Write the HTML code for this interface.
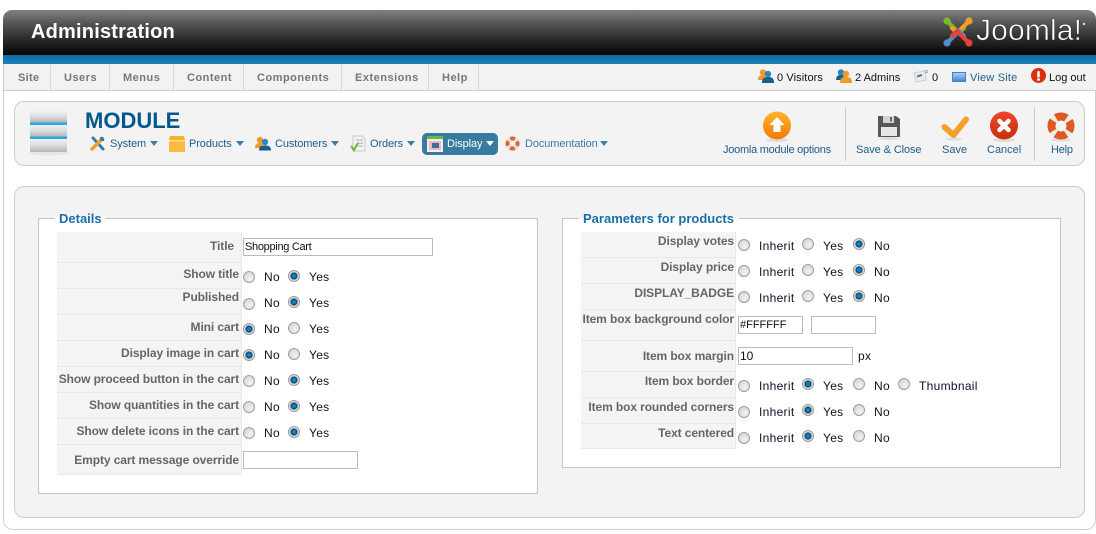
<!DOCTYPE html>
<html><head><meta charset="utf-8"><title>Administration</title>
<style>
html,body{margin:0;padding:0;background:#fff;width:1096px;height:534px;overflow:hidden}
body{position:relative;font-family:"Liberation Sans",sans-serif;font-size:12px;color:#111}
.a,.t,.l,.r,.n,.u,.f,.i,.o,svg{position:absolute}
.t{line-height:14px;white-space:nowrap}
.o{line-height:14px;white-space:nowrap;letter-spacing:.3px;color:#10102a;margin-top:-1px}
.n{line-height:14px;white-space:nowrap;top:71px;font-weight:bold;font-size:11px;letter-spacing:.5px;color:#777}
.d{position:absolute;top:65px;height:25px;width:1px;background:#d8d8d8}
.u{line-height:14px;white-space:nowrap;font-size:11px;letter-spacing:-.2px;color:#1c5d8c}
.m{top:137px;letter-spacing:-.1px}
.l{line-height:14px;white-space:nowrap;text-align:right;font-weight:bold;letter-spacing:-.1px;color:#666}
.b{position:absolute;background:#f4f4f4;border-bottom:1px solid #e8e8e8;border-right:1px solid #e8e8e8;box-sizing:border-box}
.f{border:1px solid #c4c4c4;background:#fff;box-sizing:border-box}
.i{border:1px solid #bbb;background:#fff;box-sizing:border-box;height:18px;line-height:16px;font-size:11px;padding-left:1px;color:#111;white-space:nowrap;overflow:hidden}
.r{width:12px;height:12px;border-radius:50%;box-sizing:border-box;border:1px solid #a0a0a0;background:radial-gradient(circle at 60% 65%,#f2f2f2,#cfcfcf)}
.r.c{border-color:#9a9a9a;background:radial-gradient(circle at 50% 50%,#2a93cc 0,#0b6ca6 30%,#083f66 44%,#dcdcdc 56%,#f2f2f2 100%)}
</style></head><body>

<!-- page frame -->
<div class="a" style="left:3px;top:50px;width:1093px;height:480px;box-sizing:border-box;border:1px solid #cfcfcf;border-top:0;border-radius:0 0 10px 10px"></div>

<!-- header -->
<div class="a" style="left:3px;top:10px;width:1093px;height:45px;border-radius:9px 9px 0 0;background:linear-gradient(#808080,#555 30%,#222 72%,#050505)"></div>
<div class="a" style="left:3px;top:55px;width:1093px;height:9px;background:linear-gradient(#0f6a9f,#1a83b8)"></div>
<div class="t" style="left:31px;top:20px;line-height:24px;font-size:20px;font-weight:bold;letter-spacing:.2px;color:#fff">Administration</div>

<!-- joomla logo -->
<svg style="left:942px;top:16px" width="32" height="32" viewBox="0 0 32 32" fill="none" stroke-linecap="round" stroke-linejoin="round">
<path d="M6 6 L17 17 L22 12" stroke="#7ab929" stroke-width="4.200"/>
<path d="M26 6 L15 17 L10 12" stroke="#f49e26" stroke-width="4.200"/>
<path d="M6 26 L17 15 L22 20" stroke="#4f8dcc" stroke-width="4.200"/>
<path d="M26 26 L15 15 L10 20" stroke="#e8403a" stroke-width="4.200"/>
<circle cx="5" cy="5" r="3.600" fill="#7ab929"/><circle cx="27" cy="5" r="3.600" fill="#f49e26"/>
<circle cx="5" cy="27" r="3.600" fill="#4f8dcc"/><circle cx="27" cy="27" r="3.600" fill="#e8403a"/>
</svg>
<svg style="left:974px;top:14px" width="120" height="36" viewBox="0 0 120 36"><text x="2" y="26" font-family="Liberation Sans" font-size="30" fill="#fff" stroke="#333" stroke-width=".6" textLength="106">Joomla!</text><circle cx="110" cy="10" r="1.200" fill="#ddd"/></svg>

<!-- menu bar -->
<div class="a" style="left:4px;top:64px;width:1092px;height:27px;background:#f2f2f2;border-bottom:1px solid #cfcfcf;box-sizing:border-box"></div>
<div class="n" style="left:18px;letter-spacing:.3px">Site</div><div class="d" style="left:50px"></div>
<div class="n" style="left:64px">Users</div><div class="d" style="left:109px"></div>
<div class="n" style="left:123px">Menus</div><div class="d" style="left:173px"></div>
<div class="n" style="left:187px">Content</div><div class="d" style="left:243px"></div>
<div class="n" style="left:257px">Components</div><div class="d" style="left:341px"></div>
<div class="n" style="left:355px">Extensions</div><div class="d" style="left:428px"></div>
<div class="n" style="left:442px">Help</div><div class="d" style="left:478px"></div>

<!-- status -->
<svg style="left:758px;top:68px" width="16" height="16" viewBox="0 0 16 16"><circle cx="5" cy="4.500" r="3.200" fill="#f09a2a"/><path d="M0 12c0-4 2-5 5-5s3 1 3 5z" fill="#f09a2a"/><circle cx="10" cy="6" r="3.200" fill="#2f86b8"/><path d="M4 15c0-5 2-6 6-6s6 1 6 6z" fill="#14628c"/></svg>
<div class="t" style="left:777px;top:71px;font-size:11px;letter-spacing:.1px">0 Visitors</div>
<svg style="left:836px;top:68px" width="16" height="16" viewBox="0 0 16 16"><circle cx="5" cy="4.500" r="3.200" fill="#2f86b8"/><path d="M0 12c0-4 2-5 5-5s3 1 3 5z" fill="#14628c"/><circle cx="10" cy="6" r="3.200" fill="#f09a2a"/><path d="M4 15c0-5 2-6 6-6s6 1 6 6z" fill="#f09a2a"/></svg>
<div class="t" style="left:855px;top:71px;font-size:11px">2 Admins</div>
<svg style="left:913px;top:69px" width="16" height="15" viewBox="0 0 16 15"><path d="M1 4l11-2 1 9-10 2z" fill="#ececec" stroke="#cfcfcf"/><path d="M4 7.500l5-1.500" stroke="#4a7fa6" stroke-width="2"/><circle cx="13.500" cy="2.500" r="1.300" fill="#fff" stroke="#6a9cc0" stroke-width=".7"/></svg>
<div class="t" style="left:932px;top:71px;font-size:11px">0</div>
<div class="a" style="left:952px;top:72px;width:14px;height:10px;box-sizing:border-box;border:1px solid #4c7fb6;background:linear-gradient(#a8d0f2,#3f8cdc)"></div>
<div class="t" style="left:970px;top:71px;font-size:11px;letter-spacing:.2px;color:#23638f">View Site</div>
<svg style="left:1031px;top:68px" width="15" height="15" viewBox="0 0 15 15"><circle cx="7.500" cy="7.500" r="7.500" fill="#d9300f"/><rect x="6.200" y="3" width="2.600" height="6.500" rx="1" fill="#fff"/><circle cx="7.500" cy="11.500" r="1.400" fill="#fff"/></svg>
<div class="t" style="left:1049px;top:71px;font-size:11px">Log out</div>

<!-- toolbar -->
<div class="a" style="left:14px;top:101px;width:1071px;height:65px;box-sizing:border-box;background:#f3f3f3;border:1px solid #cdcdcd;border-radius:10px"></div>
<svg style="left:27px;top:108px" width="44" height="48" viewBox="0 0 44 48">
<defs><linearGradient id="g" x1="0" y1="0" x2="0" y2="1"><stop offset="0" stop-color="#f0f0f0"/><stop offset=".5" stop-color="#dcdcdc"/><stop offset="1" stop-color="#b4b4b4"/></linearGradient></defs>
<ellipse cx="22" cy="45" rx="20" ry="2.500" fill="#e6e6e6"/>
<rect x="3" y="14" width="37" height="3" fill="#2aa8e6"/><rect x="3" y="28" width="37" height="3" fill="#2aa8e6"/>
<rect x="3" y="3" width="37" height="11.500" rx="1" fill="url(#g)"/><rect x="3" y="17" width="37" height="11.500" rx="1" fill="url(#g)"/><rect x="3" y="31" width="37" height="13" rx="1" fill="url(#g)"/>
</svg>
<div class="t" style="left:85px;top:108px;line-height:26px;font-size:22px;font-weight:bold;color:#02588c">MODULE</div>

<!-- submenu -->
<svg style="left:90px;top:135px" width="16" height="17" viewBox="0 0 16 17"><path d="M3 3l10 11" stroke="#3a7ba5" stroke-width="3" stroke-linecap="round"/><path d="M2 14L11 5" stroke="#f0a030" stroke-width="3.500" stroke-linecap="round"/><path d="M10 2c3-1 5 1 4 4l-3 0-1-1z" fill="#3a7ba5"/></svg>
<div class="u m" style="left:110px">System</div>
<svg style="left:150px;top:141px" width="8" height="5"><path d="M0 0h8L4 5z" fill="#3e7fa8"/></svg>
<svg style="left:169px;top:135px" width="16" height="17" viewBox="0 0 16 17"><path d="M1 1h14l1 4H0z" fill="#f5b32a"/><rect x="0" y="5" width="16" height="12" fill="#fcb941"/><rect y="5" width="16" height="1.500" fill="#ffe092"/></svg>
<div class="u m" style="left:189px">Products</div>
<svg style="left:236px;top:141px" width="8" height="5"><path d="M0 0h8L4 5z" fill="#3e7fa8"/></svg>
<svg style="left:255px;top:135px" width="16" height="16" viewBox="0 0 16 16"><circle cx="5" cy="5" r="3.200" fill="#f09a2a"/><path d="M0 13c0-4 2-5 5-5s3 1 3 5z" fill="#f09a2a"/><circle cx="10" cy="7" r="3.200" fill="#2f86b8"/><path d="M4 15.500c0-4 2-5 6-5s6 1 6 5z" fill="#14628c"/></svg>
<div class="u m" style="left:275px">Customers</div>
<svg style="left:331px;top:141px" width="8" height="5"><path d="M0 0h8L4 5z" fill="#3e7fa8"/></svg>
<svg style="left:350px;top:135px" width="16" height="17" viewBox="0 0 16 17"><path d="M3 1h9l3 3v12H3z" fill="#f4f4f4" stroke="#c8c8c8"/><path d="M6 5h7M7 8h6M8 11h5" stroke="#aaa"/><path d="M1 11l3 4 4-7" stroke="#7ab030" stroke-width="2" fill="none"/></svg>
<div class="u m" style="left:370px">Orders</div>
<svg style="left:407px;top:141px" width="8" height="5"><path d="M0 0h8L4 5z" fill="#3e7fa8"/></svg>
<div class="a" style="left:422px;top:133px;width:76px;height:22px;background:#377ba0;border-radius:5px"></div>
<svg style="left:427px;top:136px" width="16" height="16" viewBox="0 0 16 16"><rect width="16" height="16" fill="#eee"/><rect width="16" height="3" fill="#6fb74a"/><rect x="2" y="5" width="12" height="9" fill="#f2b8b8"/><rect x="5" y="7" width="7" height="5" fill="#3a6f96"/></svg>
<div class="u m" style="left:447px;color:#fff">Display</div>
<svg style="left:486px;top:141px" width="8" height="5"><path d="M0 0h8L4 5z" fill="#fff"/></svg>
<svg style="left:505px;top:136px" width="15" height="15" viewBox="0 0 15 15"><circle cx="7.500" cy="7.500" r="5" fill="none" stroke="#ddd" stroke-width="4"/><circle cx="7.500" cy="7.500" r="5" fill="none" stroke="#e2622a" stroke-width="4" stroke-dasharray="4.500 3.350" stroke-dashoffset="2.200"/></svg>
<div class="u m" style="left:525px;color:#3a7aa6">Documentation</div>
<svg style="left:600px;top:141px" width="8" height="5"><path d="M0 0h8L4 5z" fill="#3e7fa8"/></svg>

<!-- toolbar right -->
<svg style="left:762px;top:111px" width="30" height="32" viewBox="0 0 30 32"><defs><linearGradient id="o" x1="0" y1="0" x2="0" y2="1"><stop offset="0" stop-color="#fdb52a"/><stop offset="1" stop-color="#f47a05"/></linearGradient></defs><ellipse cx="15" cy="29" rx="11" ry="2" fill="#ddd"/><circle cx="15" cy="14.500" r="14" fill="url(#o)"/><path d="M15 6l7.500 8H18.500v7h-7v-7H7.500z" fill="#fff"/></svg>
<div class="u" style="left:723px;top:143px;letter-spacing:-.25px">Joomla module options</div>
<div class="a" style="left:845px;top:107px;width:1px;height:54px;background:#c9c9c9"></div>
<svg style="left:878px;top:115px" width="22" height="25" viewBox="0 0 22 25"><ellipse cx="11" cy="23.500" rx="10" ry="1.500" fill="#ddd"/><path d="M0 1h18l4 3v18H0z" fill="#585858"/><rect x="5" y="1" width="11" height="7" fill="#d4d4d4"/><rect x="12" y="2" width="2" height="4.500" fill="#666"/><rect x="3" y="12" width="16" height="9" fill="#e6e6e6"/></svg>
<div class="u" style="left:856px;top:143px;letter-spacing:-.1px">Save &amp; Close</div>
<svg style="left:941px;top:115px" width="28" height="26" viewBox="0 0 28 26"><ellipse cx="13" cy="24" rx="8" ry="1.500" fill="#ddd"/><path d="M3.500 12l9 8L25 4.500" fill="none" stroke="#f3a02c" stroke-width="6" stroke-linecap="round" stroke-linejoin="round"/></svg>
<div class="u" style="left:942px;top:143px;letter-spacing:0">Save</div>
<svg style="left:990px;top:111px" width="28" height="32" viewBox="0 0 28 32"><defs><linearGradient id="x" x1="0" y1="0" x2="0" y2="1"><stop offset="0" stop-color="#f0442a"/><stop offset="1" stop-color="#c52f0c"/></linearGradient></defs><ellipse cx="14" cy="29" rx="11" ry="2" fill="#ddd"/><circle cx="14" cy="14.500" r="14" fill="url(#x)"/><path d="M9.500 10l9 9M18.500 10l-9 9" stroke="#fff" stroke-width="4.500" stroke-linecap="round"/></svg>
<div class="u" style="left:987px;top:143px;letter-spacing:0">Cancel</div>
<div class="a" style="left:1034px;top:107px;width:1px;height:54px;background:#c9c9c9"></div>
<svg style="left:1047px;top:112px" width="28" height="30" viewBox="0 0 28 30"><ellipse cx="14" cy="28" rx="10" ry="1.500" fill="#ddd"/><circle cx="14" cy="14" r="9.500" fill="none" stroke="#ececec" stroke-width="8"/><circle cx="14" cy="14" r="9.500" fill="none" stroke="#df5a20" stroke-width="8" stroke-dasharray="10.900 4" stroke-dashoffset="5.450"/></svg>
<div class="u" style="left:1051px;top:143px">Help</div>

<!-- content -->
<div class="a" style="left:14px;top:186px;width:1071px;height:332px;box-sizing:border-box;background:#f3f3f3;border:1px solid #cdcdcd;border-radius:10px"></div>

<!-- left fieldset -->
<div class="f a" style="left:38px;top:218px;width:500px;height:276px"></div>
<div class="a" style="left:55px;top:212px;width:50px;height:12px;background:linear-gradient(#f3f3f3 50%,#fff 50%)"></div>
<div class="t" style="left:59px;top:212px;font-size:13px;font-weight:bold;color:#1a6ea6">Details</div>

<div class="b" style="left:57px;top:232px;width:185px;height:31px"></div>
<div class="b" style="left:57px;top:263px;width:185px;height:26px"></div>
<div class="b" style="left:57px;top:289px;width:185px;height:26px"></div>
<div class="b" style="left:57px;top:315px;width:185px;height:26px"></div>
<div class="b" style="left:57px;top:341px;width:185px;height:26px"></div>
<div class="b" style="left:57px;top:367px;width:185px;height:26px"></div>
<div class="b" style="left:57px;top:393px;width:185px;height:26px"></div>
<div class="b" style="left:57px;top:419px;width:185px;height:26px"></div>
<div class="b" style="left:57px;top:445px;width:185px;height:30px"></div>

<div class="l" style="left:40px;width:194px;top:239px">Title</div>
<div class="i" style="left:243px;top:238px;width:190px;letter-spacing:-.3px">Shopping Cart</div>

<div class="l" style="left:40px;width:199px;top:267px">Show title</div>
<div class="r" style="left:243px;top:271px"></div><div class="o" style="left:264px;top:271px">No</div><div class="r c" style="left:288px;top:270px"></div><div class="o" style="left:309px;top:271px">Yes</div>
<div class="l" style="left:40px;width:199px;top:290px">Published</div>
<div class="r" style="left:243px;top:298px"></div><div class="o" style="left:264px;top:297px">No</div><div class="r c" style="left:288px;top:296px"></div><div class="o" style="left:309px;top:297px">Yes</div>
<div class="l" style="left:40px;width:199px;top:320px">Mini cart</div>
<div class="r c" style="left:243px;top:323px"></div><div class="o" style="left:264px;top:323px">No</div><div class="r" style="left:288px;top:322px"></div><div class="o" style="left:309px;top:323px">Yes</div>
<div class="l" style="left:40px;width:199px;top:346px">Display image in cart</div>
<div class="r c" style="left:243px;top:349px"></div><div class="o" style="left:264px;top:349px">No</div><div class="r" style="left:288px;top:348px"></div><div class="o" style="left:309px;top:349px">Yes</div>
<div class="l" style="left:40px;width:199px;top:372px">Show proceed button in the cart</div>
<div class="r" style="left:243px;top:375px"></div><div class="o" style="left:264px;top:375px">No</div><div class="r c" style="left:288px;top:374px"></div><div class="o" style="left:309px;top:375px">Yes</div>
<div class="l" style="left:40px;width:199px;top:398px">Show quantities in the cart</div>
<div class="r" style="left:243px;top:401px"></div><div class="o" style="left:264px;top:401px">No</div><div class="r c" style="left:288px;top:400px"></div><div class="o" style="left:309px;top:401px">Yes</div>
<div class="l" style="left:40px;width:199px;top:424px">Show delete icons in the cart</div>
<div class="r" style="left:243px;top:427px"></div><div class="o" style="left:264px;top:427px">No</div><div class="r c" style="left:288px;top:426px"></div><div class="o" style="left:309px;top:427px">Yes</div>
<div class="l" style="left:40px;width:199px;top:453px">Empty cart message override</div>
<div class="i" style="left:243px;top:451px;width:115px"></div>

<!-- right fieldset -->
<div class="f a" style="left:562px;top:218px;width:499px;height:250px"></div>
<div class="a" style="left:579px;top:212px;width:160px;height:12px;background:linear-gradient(#f3f3f3 50%,#fff 50%)"></div>
<div class="t" style="left:583px;top:212px;font-size:13px;font-weight:bold;color:#1a6ea6">Parameters for products</div>

<div class="b" style="left:581px;top:232px;width:155px;height:26px"></div>
<div class="b" style="left:581px;top:258px;width:155px;height:26px"></div>
<div class="b" style="left:581px;top:284px;width:155px;height:26px"></div>
<div class="b" style="left:581px;top:310px;width:155px;height:31px"></div>
<div class="b" style="left:581px;top:341px;width:155px;height:31px"></div>
<div class="b" style="left:581px;top:372px;width:155px;height:26px"></div>
<div class="b" style="left:581px;top:398px;width:155px;height:26px"></div>
<div class="b" style="left:581px;top:424px;width:155px;height:25px"></div>

<div class="l" style="left:534px;width:200px;top:234px">Display votes</div>
<div class="r" style="left:738px;top:239px"></div><div class="o" style="left:759px;top:240px">Inherit</div><div class="r" style="left:802px;top:238px"></div><div class="o" style="left:823px;top:240px">Yes</div><div class="r c" style="left:853px;top:238px"></div><div class="o" style="left:874px;top:240px">No</div>
<div class="l" style="left:534px;width:200px;top:260px">Display price</div>
<div class="r" style="left:738px;top:265px"></div><div class="o" style="left:759px;top:266px">Inherit</div><div class="r" style="left:802px;top:264px"></div><div class="o" style="left:823px;top:266px">Yes</div><div class="r c" style="left:853px;top:264px"></div><div class="o" style="left:874px;top:266px">No</div>
<div class="l" style="left:534px;width:200px;top:286px">DISPLAY_BADGE</div>
<div class="r" style="left:738px;top:291px"></div><div class="o" style="left:759px;top:292px">Inherit</div><div class="r" style="left:802px;top:290px"></div><div class="o" style="left:823px;top:292px">Yes</div><div class="r c" style="left:853px;top:290px"></div><div class="o" style="left:874px;top:292px">No</div>
<div class="l" style="left:534px;width:200px;top:312px">Item box background color</div>
<div class="i" style="left:738px;top:316px;width:65px">#FFFFFF</div>
<div class="i" style="left:811px;top:316px;width:65px"></div>
<div class="l" style="left:534px;width:200px;top:349px">Item box margin</div>
<div class="i" style="left:738px;top:347px;width:115px;font-size:12px">10</div>
<div class="o" style="left:858px;top:350px">px</div>
<div class="l" style="left:534px;width:200px;top:374px">Item box border</div>
<div class="r" style="left:738px;top:380px"></div><div class="o" style="left:759px;top:380px">Inherit</div><div class="r c" style="left:802px;top:378px"></div><div class="o" style="left:823px;top:380px">Yes</div><div class="r" style="left:853px;top:378px"></div><div class="o" style="left:874px;top:380px">No</div><div class="r" style="left:898px;top:378px"></div><div class="o" style="left:919px;top:380px">Thumbnail</div>
<div class="l" style="left:534px;width:200px;top:400px">Item box rounded corners</div>
<div class="r" style="left:738px;top:406px"></div><div class="o" style="left:759px;top:406px">Inherit</div><div class="r c" style="left:802px;top:404px"></div><div class="o" style="left:823px;top:406px">Yes</div><div class="r" style="left:853px;top:404px"></div><div class="o" style="left:874px;top:406px">No</div>
<div class="l" style="left:534px;width:200px;top:426px">Text centered</div>
<div class="r" style="left:738px;top:432px"></div><div class="o" style="left:759px;top:432px">Inherit</div><div class="r c" style="left:802px;top:430px"></div><div class="o" style="left:823px;top:432px">Yes</div><div class="r" style="left:853px;top:430px"></div><div class="o" style="left:874px;top:432px">No</div>

</body></html>
